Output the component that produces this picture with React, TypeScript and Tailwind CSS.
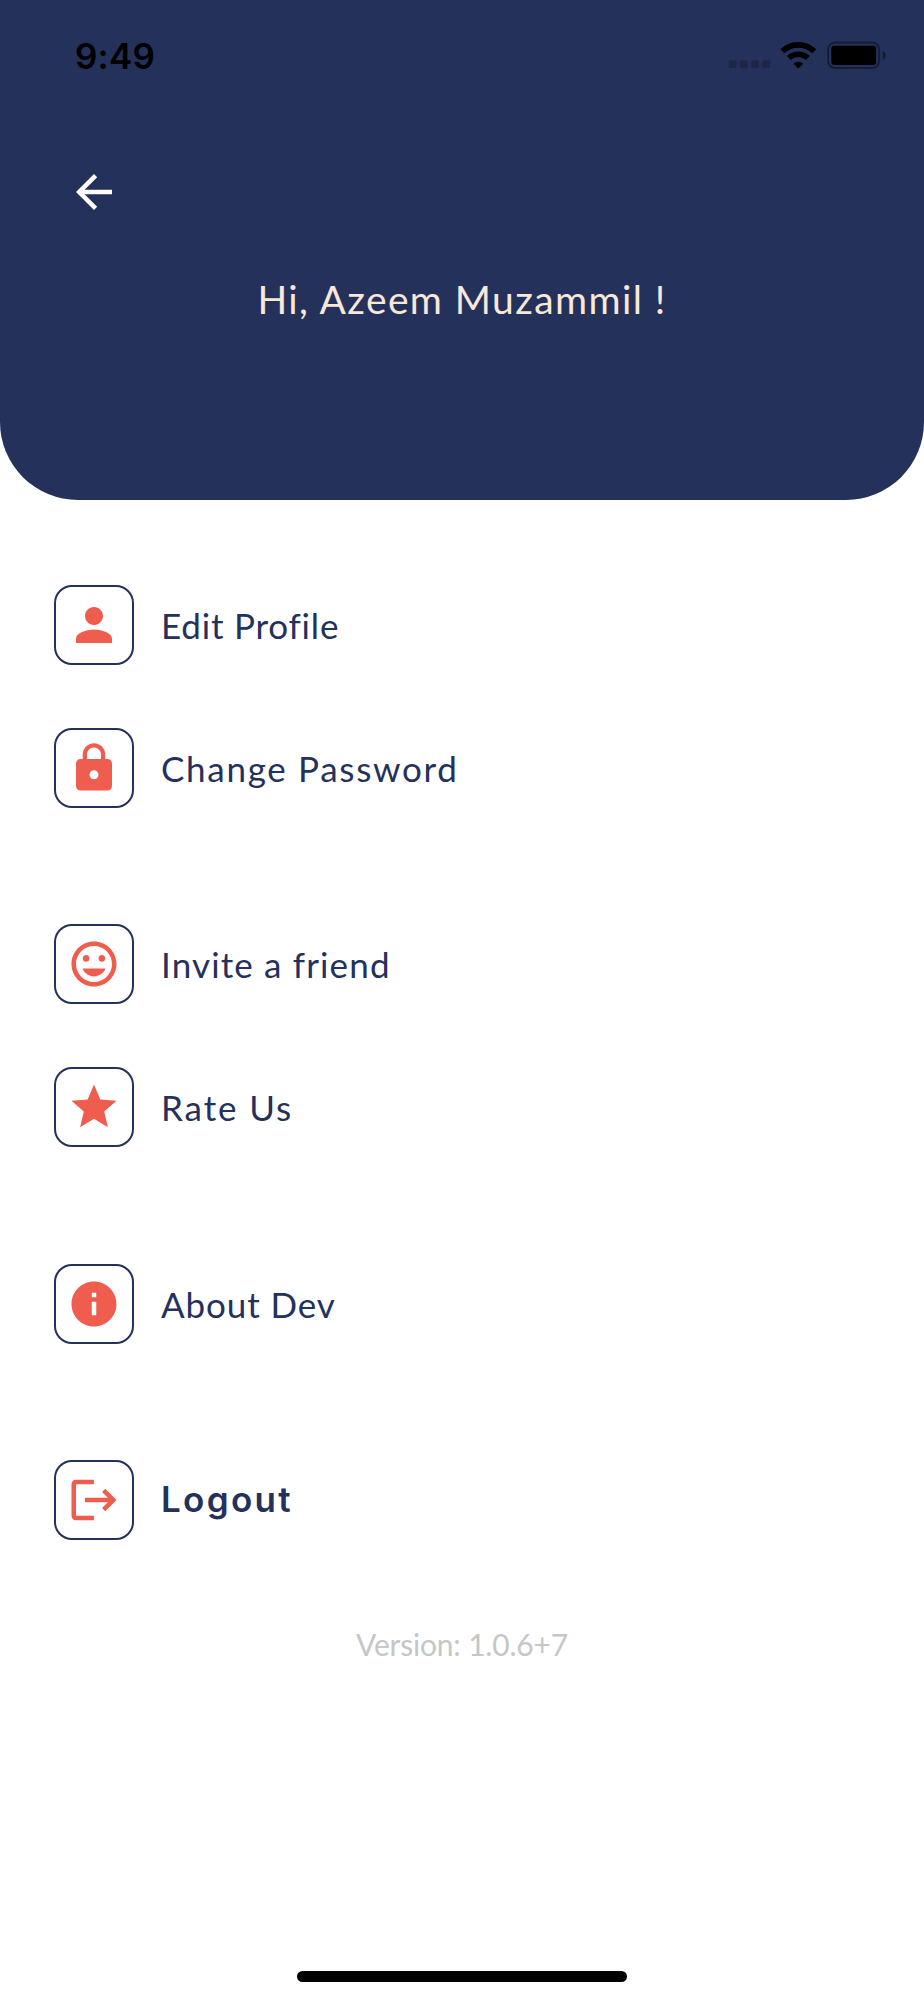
import React from 'react';
import type { IconType } from 'react-icons';
import { MdArrowBack, MdInfo, MdInsertEmoticon, MdLock, MdPerson, MdStar } from 'react-icons/md';

interface MenuItem {
  id: string;
  label: string;
  icon: IconType | React.FC<{ className?: string }>;
  textClass: string;
}

const LogoutIcon: React.FC<{ className?: string }> = ({ className }) => (
  <svg viewBox="0 0 24 24" fill="currentColor" className={className}>
    <path d="M17 7l-1.41 1.41L18.17 11H8v2h10.17l-2.58 2.58L17 17l5-5-5-5zM4 5h8V3H4c-1.1 0-2 .9-2 2v14c0 1.1.9 2 2 2h8v-2H4V5z" />
  </svg>
);

const menuGroups: MenuItem[][] = [
  [
    { id: 'profile', label: 'Edit Profile', icon: MdPerson, textClass: 'text-[35px] font-normal tracking-[0.8px]' },
    { id: 'password', label: 'Change Password', icon: MdLock, textClass: 'text-[35px] font-normal tracking-[1.7px]' },
  ],
  [
    { id: 'invite', label: 'Invite a friend', icon: MdInsertEmoticon, textClass: 'text-[35px] font-normal tracking-[1.15px]' },
    { id: 'rate', label: 'Rate Us', icon: MdStar, textClass: 'text-[35px] font-normal tracking-[1.9px]' },
  ],
  [{ id: 'about', label: 'About Dev', icon: MdInfo, textClass: 'text-[35px] font-normal tracking-[0.9px]' }],
  [
    {
      id: 'logout',
      label: 'Logout',
      icon: LogoutIcon,
      textClass: "font-['Inter',sans-serif] text-[35px] font-semibold tracking-[2.3px] -mt-0.5",
    },
  ],
];

const StatusBar: React.FC = () => (
  <div className="flex h-[110px] items-center justify-between pl-[75px] pr-[37px] text-black">
    <span className="mt-0.5 font-['Inter',sans-serif] text-[35px] leading-none font-semibold tracking-[0.2px]">9:49</span>
    <svg width="160" height="30" viewBox="0 0 160 30">
      {/* Signal */}
      <g fillOpacity="0.22">
        <rect x="1.6" y="20.2" width="8" height="8" rx="2" />
        <rect x="12.8" y="20.2" width="8" height="8" rx="2" />
        <rect x="24" y="20.2" width="8" height="8" rx="2" />
        <rect x="35.2" y="20.2" width="8" height="8" rx="2" />
      </g>
      {/* Wifi */}
      <g fill="none" stroke="#000" strokeWidth="5.6">
        <path d="M55.4 11.3a22.8 22.8 0 0 1 31.8 0" />
        <path d="M61.8 18.1a13.7 13.7 0 0 1 19 0" />
      </g>
      <path d="M71.3 28.4l-4.9-4.7a7 7 0 0 1 9.8 0z" />
      {/* Battery */}
      <rect x="101.1" y="2.5" width="51" height="25.5" rx="7" fill="none" stroke="#000" strokeOpacity="0.4" strokeWidth="2" />
      <rect x="104.3" y="5.7" width="44.8" height="19.2" rx="3" />
      <path d="M155.7 10.7c4 1.5 4 7.7 0 9.2z" fillOpacity="0.45" />
    </svg>
  </div>
);

const MenuRow: React.FC<{ item: MenuItem }> = ({ item }) => {
  const Icon = item.icon;
  return (
    <button className="flex w-full items-center text-left">
      <span className="flex h-20 w-20 items-center justify-center rounded-[18px] border-2 border-[#24315b]">
        <Icon className="h-[54px] w-[54px] shrink-0 text-[#ef5d4e]" />
      </span>
      <span className={`ml-[27px] leading-[44px] text-[#24315b] ${item.textClass}`}>{item.label}</span>
    </button>
  );
};

const App: React.FC = () => {
  return (
    <div className="flex h-[2000px] w-[924px] flex-col overflow-hidden bg-white font-['Lato',sans-serif]">
      <header className="h-[500px] rounded-b-[78px] bg-[#24315b]">
        <StatusBar />
        <button className="mt-[55px] ml-[67px] block text-white">
          <MdArrowBack className="h-[54px] w-[54px]" />
        </button>
        <h1 className="mt-[54px] text-center text-[39px] leading-[52px] font-normal tracking-[1.4px] text-[#f7e8d8]">
          Hi, Azeem Muzammil !
        </h1>
      </header>

      <main className="mt-[85px] flex flex-col gap-[116.4px] pl-[54px]">
        {menuGroups.map((group) => (
          <div key={group[0].id} className="flex flex-col gap-[63px]">
            {group.map((item) => (
              <MenuRow key={item.id} item={item} />
            ))}
          </div>
        ))}
      </main>

      <p className="mt-[84px] text-center text-[30px] leading-10 font-normal tracking-[-0.2px] text-[#c6c6c6]">
        Version: 1.0.6+7
      </p>

      <div className="mx-auto mt-auto mb-[18px] h-[11px] w-[330px] rounded-full bg-black" />
    </div>
  );
};

export default App;
